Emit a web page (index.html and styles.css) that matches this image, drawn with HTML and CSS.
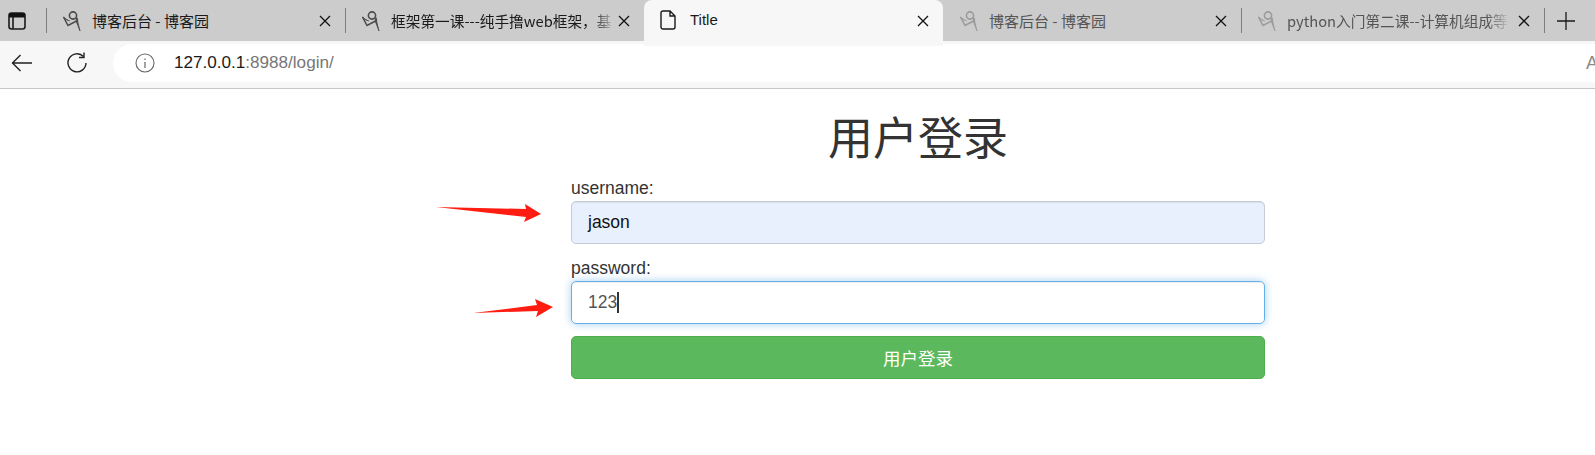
FILE: index.html
```html
<!DOCTYPE html>
<html lang="zh">
<head>
<meta charset="utf-8">
<title>Title</title>
<link rel="stylesheet" href="styles.css">
</head>
<body>
<svg width="0" height="0" class="defs">
  <symbol id="fav" viewBox="0 0 20 20">
    <path d="M1.5 6 L6 14.5 L15.5 9.5" fill="none" stroke="currentColor" stroke-width="1.5"/>
    <path d="M1.5 6 Q4 9.5 8 10 M14 7.5 L14.5 11 L18 20 L15.8 11 L15.5 7z" fill="currentColor" stroke="currentColor" stroke-width="0.8"/>
    <circle cx="11" cy="4.5" r="3.6" fill="none" stroke="currentColor" stroke-width="1.6"/>
  </symbol>
  <symbol id="close" viewBox="0 0 12 12">
    <path d="M1 1 L11 11 M11 1 L1 11" stroke="currentColor" stroke-width="1.3" fill="none"/>
  </symbol>
</svg>
<header class="chrome">
  <div class="tabstrip">
    <div class="panel-btn">
      <svg width="18" height="18" viewBox="0 0 18 18"><rect x="1" y="1" width="16" height="16" rx="2.5" fill="none" stroke="#1a1a1a" stroke-width="1.6"/><path d="M1 3 a2 2 0 0 1 2-2 h12 a2 2 0 0 1 2 2 v2.5 h-16z" fill="#111"/><path d="M5 5 v12" stroke="#1a1a1a" stroke-width="1.6"/></svg>
    </div>
    <div class="tab sep">
      <svg class="favicon" width="20" height="20"><use href="#fav"/></svg>
      <span class="tab-title short">博客后台 - 博客园</span>
      <svg class="tab-close" width="12" height="12"><use href="#close"/></svg>
    </div>
    <div class="tab sep tab-b">
      <svg class="favicon" width="20" height="20"><use href="#fav"/></svg>
      <span class="tab-title fade">框架第一课---纯手撸web框架，基</span>
      <svg class="tab-close" width="12" height="12"><use href="#close"/></svg>
    </div>
    <div class="tab active">
      <svg class="page-icon" width="16" height="20" viewBox="0 0 16 20"><path d="M3 1 H10 L15 6 V17 a2 2 0 0 1-2 2 H3 a2 2 0 0 1-2-2 V3 a2 2 0 0 1 2-2z M10 1 V6 H15" fill="none" stroke="#1a1a1a" stroke-width="1.4"/></svg>
      <span class="tab-title">Title</span>
      <svg class="tab-close" width="12" height="12"><use href="#close"/></svg>
    </div>
    <div class="tab dim tab-d">
      <svg class="favicon" width="20" height="20"><use href="#fav"/></svg>
      <span class="tab-title short">博客后台 - 博客园</span>
      <svg class="tab-close" width="12" height="12"><use href="#close"/></svg>
    </div>
    <div class="tab sep dim tab-e">
      <svg class="favicon" width="20" height="20"><use href="#fav"/></svg>
      <span class="tab-title fade">python入门第二课--计算机组成等</span>
      <svg class="tab-close" width="12" height="12"><use href="#close"/></svg>
    </div>
    <div class="new-tab sep">
      <svg width="18" height="18" viewBox="0 0 18 18"><path d="M9 0 V18 M0 9 H18" stroke="#1a1a1a" stroke-width="1.3"/></svg>
    </div>
  </div>
  <div class="toolbar">
    <svg class="nav-back" width="22" height="18" viewBox="0 0 22 18"><path d="M21 9 H1.5 M9.5 1 L1.5 9 L9.5 17" fill="none" stroke="#222" stroke-width="1.4"/></svg>
    <svg class="nav-reload" width="22" height="22" viewBox="0 0 22 22"><path d="M17.5 4.6 A9 9 0 1 0 20 11" fill="none" stroke="#222" stroke-width="1.4"/><path d="M18 0.5 V5.5 H13" fill="none" stroke="#222" stroke-width="1.4"/></svg>
    <div class="omnibox">
      <svg class="info" width="20" height="20" viewBox="0 0 20 20"><circle cx="10" cy="10" r="9" fill="none" stroke="#666" stroke-width="1.1"/><path d="M10 9 V15 M10 5.5 V7" stroke="#666" stroke-width="1.2"/></svg>
      <span class="url"><span class="host">127.0.0.1</span>:8988/login/</span>
      <span class="reader">A</span>
    </div>
  </div>
</header>
<main class="page">
  <h1 class="heading">用户登录</h1>
  <form class="form">
    <div class="group">
      <label class="label">username:</label>
      <div class="field autofill">jason</div>
    </div>
    <div class="group">
      <label class="label">password:</label>
      <div class="field focus">123<span class="caret"></span></div>
    </div>
    <div class="submit">用户登录</div>
  </form>
</main>
<svg class="arrow arrow-one" width="106" height="19" viewBox="0 0 106 19"><polygon points="0,3 90,5 89,0 105,10 88,18 90,13" fill="#ff1c10"/></svg>
<svg class="arrow arrow-two" width="81" height="20" viewBox="0 0 81 20"><polygon points="0,15 64,7 62,1 80,9 63,19 65,13" fill="#ff1c10"/></svg>
</body>
</html>
```
FILE: styles.css
```css
* { box-sizing: border-box; }
html, body { margin: 0; padding: 0; background: #fff; }
body {
  width: 1595px;
  height: 455px;
  overflow: hidden;
  position: relative;
  font-family: "Liberation Sans", "Noto Sans CJK SC", sans-serif;
  color: #333;
}
.defs { position: absolute; }

.chrome { height: 89px; border-bottom: 1px solid #c6c6c6; }
.tabstrip {
  height: 41px;
  display: flex;
  align-items: stretch;
  background: #cccccc;
}
.panel-btn { width: 46px; display: flex; align-items: center; padding-left: 8px; }
.tab {
  position: relative;
  width: 299px;
  display: flex;
  align-items: center;
  padding: 0 14px 0 16px;
  font-family: "Noto Sans CJK SC", "Liberation Sans", sans-serif;
  font-size: 14.7px;
  color: #1a1a1a;
}
.tab-b { width: 299px; }
.tab-d { width: 298px; }
.tab-e { width: 303px; }
.sep::before {
  content: "";
  position: absolute;
  left: 0;
  top: 8px;
  height: 25px;
  width: 1px;
  background: #7d7d7d;
}
.favicon { color: #4a4a4a; flex: none; margin-right: 10px; }
.page-icon { flex: none; margin-right: 14px; }
.tab-title { flex: 1; white-space: nowrap; overflow: hidden; min-width: 0; }
.short { font-size: 15px; }
.fade { -webkit-mask-image: linear-gradient(to right, #000 90%, transparent 100%); mask-image: linear-gradient(to right, #000 90%, transparent 100%); }
.tab-close { flex: none; color: #111; margin-left: 8px; }
.tab-b .tab-close { margin-left: 3px; }
.active {
  background: #f7f7f7;
  border-radius: 8px 8px 0 0;
  height: 46px;
  font-family: "Liberation Sans", "Noto Sans CJK SC", sans-serif;
  padding-top: 0;
  align-items: flex-start;
}
.active .page-icon { margin-top: 10px; }
.active .tab-title { margin-top: 11px; font-size: 15px; }
.active .tab-close { margin-top: 15px; }
.dim .favicon { color: #9a9a9a; }
.dim .tab-title { color: #555; }
.new-tab { position: relative; flex: 1; display: flex; align-items: center; padding-left: 13px; }

.toolbar {
  height: 47px;
  background: #f7f7f7;
  display: flex;
  align-items: center;
  padding: 0 0 3px 11px;
}
.nav-back { flex: none; margin-right: 33px; }
.nav-reload { flex: none; margin-right: 25px; }
.omnibox {
  flex: 1;
  height: 38px;
  background: #fff;
  border-radius: 19px 0 0 19px;
  display: flex;
  align-items: center;
  padding-left: 22px;
  font-size: 17.1px;
  color: #767676;
}
.info { flex: none; margin-right: 19px; }
.url { flex: 1; }
.host { color: #1a1a1a; }
.reader { color: #8a8a8a; font-size: 18px; margin-right: -3px; }

.page { width: 694px; margin-left: 571px; }
.heading {
  margin: 19px 0 0;
  text-align: center;
  font-weight: 400;
  font-size: 45px;
  line-height: 56px;
  color: #333;
  font-family: "Noto Sans CJK SC", sans-serif;
}
.form { margin-top: 12px; }
.group { margin-bottom: 12px; }
.label { display: block; font-size: 17.5px; line-height: 25px; height: 25px; color: #333; }
.field {
  height: 43px;
  border: 1px solid #ccc;
  border-radius: 5px;
  padding: 0 16px;
  display: flex;
  align-items: center;
  font-size: 17.5px;
  color: #555;
}
.autofill { background: #e8f0fe; color: #111; border-color: #c6cbd6; box-shadow: inset 0 1px 1px rgba(0,0,0,.075); }
.focus { border-color: #66afe9; box-shadow: inset 0 1px 1px rgba(0,0,0,.075), 0 0 8px rgba(102,175,233,.6); }
.caret { display: inline-block; width: 2px; height: 21px; background: #333; margin-left: 0; }
.submit {
  height: 43px;
  border: 1px solid #4cae4c;
  border-radius: 5px;
  background: #5cb85c;
  color: #fff;
  font-size: 17.5px;
  font-family: "Noto Sans CJK SC", sans-serif;
  display: flex;
  align-items: center;
  justify-content: center;
}

.arrow { position: absolute; }
.arrow-one { left: 436px; top: 204px; }
.arrow-two { left: 473px; top: 298px; }
```
